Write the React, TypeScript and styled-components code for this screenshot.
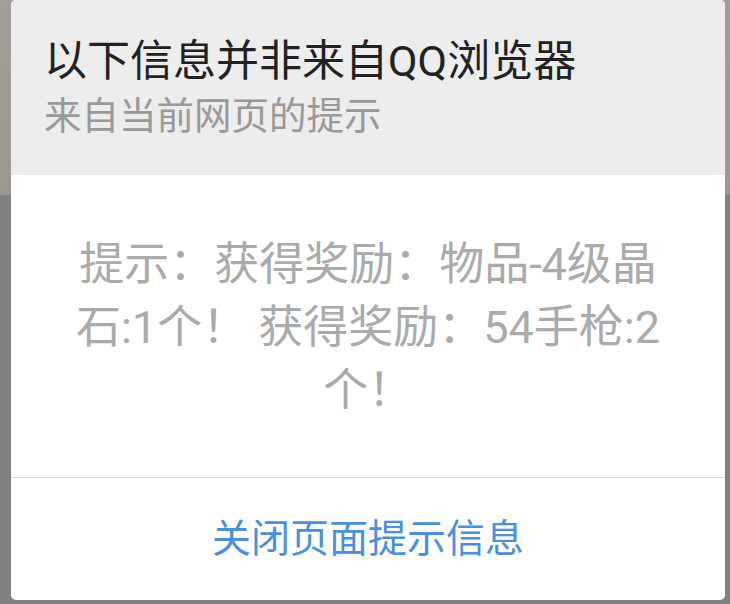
import React from "react";
import styled, { createGlobalStyle } from "styled-components";

const GlobalStyle = createGlobalStyle`
  html, body {
    margin: 0;
    padding: 0;
    height: 100%;
  }
  body {
    background: linear-gradient(to bottom, #a29f98 0px, #9b988f 194px, #808080 196px, #808080 100%);
    font-family: Roboto, "Noto Sans CJK SC", "Noto Sans", sans-serif;
    overflow: hidden;
  }
`;

const Overlay = styled.div`
  display: flex;
  justify-content: flex-start;
  padding: 0 5px 4px 11px;
  height: 604px;
  box-sizing: border-box;
`;

const Dialog = styled.div`
  width: 714px;
  height: 600px;
  display: flex;
  flex-direction: column;
  background: #ffffff;
  border-radius: 5px;
  overflow: hidden;
`;

const Header = styled.div`
  background: #ededed;
  height: 175px;
  box-sizing: border-box;
  padding: 35px 33px 0 33px;
  display: flex;
  flex-direction: column;
`;

const Title = styled.div`
  font-size: 43px;
  line-height: 52px;
  font-weight: 400;
  color: #222222;
  white-space: nowrap;
`;

const Subtitle = styled.div`
  margin-top: 6px;
  font-size: 37.5px;
  line-height: 46px;
  color: #999999;
  white-space: nowrap;
`;

const Body = styled.div`
  height: 303px;
  box-sizing: border-box;
  padding: 58px 50px 0 50px;
  text-align: center;
  font-size: 45px;
  line-height: 63px;
  color: #aaaaaa;
  border-bottom: 1px solid #dddddd;
`;

const Footer = styled.div`
  flex: 1;
  display: flex;
  align-items: center;
  justify-content: center;
  box-sizing: border-box;
`;

const CloseButton = styled.button`
  border: none;
  background: transparent;
  padding: 0;
  font-family: inherit;
  font-size: 39px;
  line-height: 48px;
  color: #4a8fdf;
  cursor: pointer;
`;

export default function App() {
  return (
    <>
      <GlobalStyle />
      <Overlay>
        <Dialog>
          <Header>
            <Title>以下信息并非来自QQ浏览器</Title>
            <Subtitle>来自当前网页的提示</Subtitle>
          </Header>
          <Body>提示：获得奖励：物品-4级晶石:1个！ 获得奖励：54手枪:2个！</Body>
          <Footer>
            <CloseButton>关闭页面提示信息</CloseButton>
          </Footer>
        </Dialog>
      </Overlay>
    </>
  );
}
